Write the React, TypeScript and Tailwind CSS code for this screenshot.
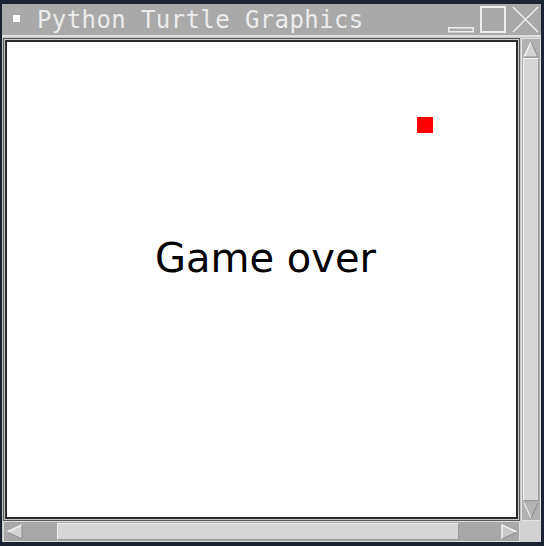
const UpArrow = () => (
  <svg width="16" height="17" viewBox="0 0 16 17">
    <polygon points="8,1 15,16 1,16" fill="#d4d4d4" />
    <polyline points="1,16 8,1" stroke="#f2f2f2" strokeWidth="1.5" fill="none" />
    <polyline points="8,1 15,16 1,16" stroke="#8c8c8c" strokeWidth="1" fill="none" />
  </svg>
);

const DownArrow = () => (
  <svg width="16" height="17" viewBox="0 0 16 17">
    <polygon points="1,1 15,1 8,16" fill="#b4b4b4" />
    <polyline points="1,1 8,16" stroke="#e6e6e6" strokeWidth="1.5" fill="none" />
    <polyline points="8,16 15,1" stroke="#8c8c8c" strokeWidth="1" fill="none" />
  </svg>
);

const LeftArrow = () => (
  <svg width="17" height="16" viewBox="0 0 17 16">
    <polygon points="1,8 16,1 16,15" fill="#d4d4d4" />
    <polyline points="16,1 1,8" stroke="#f2f2f2" strokeWidth="1.5" fill="none" />
    <polyline points="1,8 16,15 16,1" stroke="#8c8c8c" strokeWidth="1" fill="none" />
  </svg>
);

const RightArrow = () => (
  <svg width="17" height="16" viewBox="0 0 17 16">
    <polygon points="1,1 16,8 1,15" fill="#c8c8c8" />
    <polyline points="1,15 1,1 16,8" stroke="#f2f2f2" strokeWidth="1.5" fill="none" />
    <polyline points="16,8 1,15" stroke="#8c8c8c" strokeWidth="1" fill="none" />
  </svg>
);

const TitleBar = () => {
  return (
    <div className="h-[31px] flex items-center bg-[#a9a9a9] pl-[11px] pr-[2px]">
      <div className="w-[7px] h-[7px] bg-white mb-[2px]" />
      <span className="ml-[17px] text-[24px] leading-none tracking-[0.4px] text-[#ececec] font-['DejaVu_Sans_Mono',monospace] whitespace-pre">
        Python Turtle Graphics
      </span>
      <div className="ml-auto flex items-end gap-[6px] h-full pb-[2px] pt-[2px]">
        <svg width="26" height="6" viewBox="0 0 26 6">
          <rect x="0.75" y="0.75" width="24.5" height="4" fill="none" stroke="#eeeeee" strokeWidth="1.5" />
        </svg>
        <svg width="26" height="27" viewBox="0 0 26 27">
          <rect x="1" y="1" width="24" height="25" fill="none" stroke="#eeeeee" strokeWidth="2" />
        </svg>
        <svg width="27" height="27" viewBox="0 0 27 27">
          <line x1="1" y1="1" x2="26" y2="26" stroke="#eeeeee" strokeWidth="1.5" />
          <line x1="26" y1="1" x2="1" y2="26" stroke="#eeeeee" strokeWidth="1.5" />
        </svg>
      </div>
    </div>
  );
};

const App = () => {
  return (
    <div className="w-[544px] h-[546px] bg-[#1b2231] pl-[2px] pr-[3px] pt-[4px] pb-[4px] flex flex-col">
      <TitleBar />
      <div className="flex-1 flex flex-col bg-[#c4c4c4] border-t-2 border-[#dedede] pl-[1px] pt-[1px]">
        <div className="flex flex-1">
          {/* canvas */}
          <div className="flex-1 border border-[#5a5a5a] p-[1px] bg-[#c8c8c8]">
            <div className="relative h-full border-2 border-[#2c2c2c] bg-white overflow-hidden">
              <div className="absolute left-[410px] top-[75px] w-[16px] h-[16px] bg-[#ff0000]" />
              <div className="absolute left-[148px] top-[196px] text-[40px] leading-none text-black font-['DejaVu_Sans',sans-serif] whitespace-pre">
                Game over
              </div>
            </div>
          </div>
          {/* vertical scrollbar */}
          <div className="w-[20px] ml-[1px] flex flex-col bg-[#b0b0b0] border border-[#e2e2e2] p-[1px]">
            <div className="h-[18px] flex items-center justify-center">
              <UpArrow />
            </div>
            <div className="flex-1 bg-[#d6d6d6] border border-[#f0f0f0] border-r-[#9a9a9a] border-b-[#9a9a9a]" />
            <div className="h-[18px] flex items-center justify-center">
              <DownArrow />
            </div>
          </div>
        </div>
        <div className="flex h-[21px]">
          {/* horizontal scrollbar */}
          <div className="flex-1 flex items-center bg-[#a8a8a8] border border-[#dcdcdc] p-[1px]">
            <div className="w-[18px] flex items-center justify-center">
              <LeftArrow />
            </div>
            <div className="w-[34px]" />
            <div className="w-[402px] h-full bg-[#d6d6d6] border border-[#f0f0f0] border-r-[#9a9a9a] border-b-[#9a9a9a]" />
            <div className="flex-1" />
            <div className="w-[18px] flex items-center justify-center">
              <RightArrow />
            </div>
          </div>
          <div className="w-[21px] bg-[#d2d2d2]" />
        </div>
      </div>
    </div>
  );
};

export default App;
